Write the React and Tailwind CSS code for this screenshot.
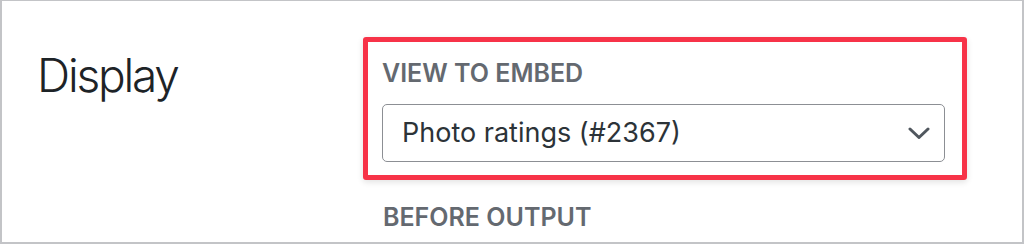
import React from "react";

const font = { fontFamily: "Inter, 'Noto Sans', sans-serif" };

const ChevronDown = () => (
  <svg width="22" height="12" viewBox="0 0 22 12" fill="none" className="shrink-0">
    <path d="M2 2l9 8.5L20 2" stroke="#50575e" strokeWidth="3" strokeLinecap="round" strokeLinejoin="round" />
  </svg>
);

export default function App() {
  return (
    <div
      className="w-[1024px] h-[244px] bg-white border-2 border-t border-[#c3c4c7] flex overflow-hidden"
      style={font}
    >
      {/* Section title */}
      <div className="w-[361px] shrink-0 pl-[35px] pt-[46px]">
        <h2 className="text-[46px] leading-[56px] font-light tracking-[-2.2px] text-[#1d2327]">Display</h2>
      </div>

      {/* Settings column */}
      <div className="flex-1 pt-[36px]">
        <div className="w-[604px] border-[5px] border-[#f73348] rounded-[3px] shadow-[0_2px_6px_rgba(0,0,0,0.12)] px-[14px] pt-[17px] pb-[13px]">
          <label className="block text-[25px] leading-[28px] font-semibold uppercase text-[#646970] mb-[17px]">
            View to Embed
          </label>
          <div className="h-[58px] w-[563px] border-[1.5px] border-[#8c8f94] rounded-[5px] flex items-center justify-between pl-[19px] pr-[14px]">
            <span className="text-[27px] text-[#2c3338]">Photo ratings (#2367)</span>
            <ChevronDown />
          </div>
        </div>
        <div className="pl-[20px] pt-[23px] text-[25px] leading-[28px] font-semibold uppercase text-[#646970]">
          Before Output
        </div>
      </div>
    </div>
  );
}
